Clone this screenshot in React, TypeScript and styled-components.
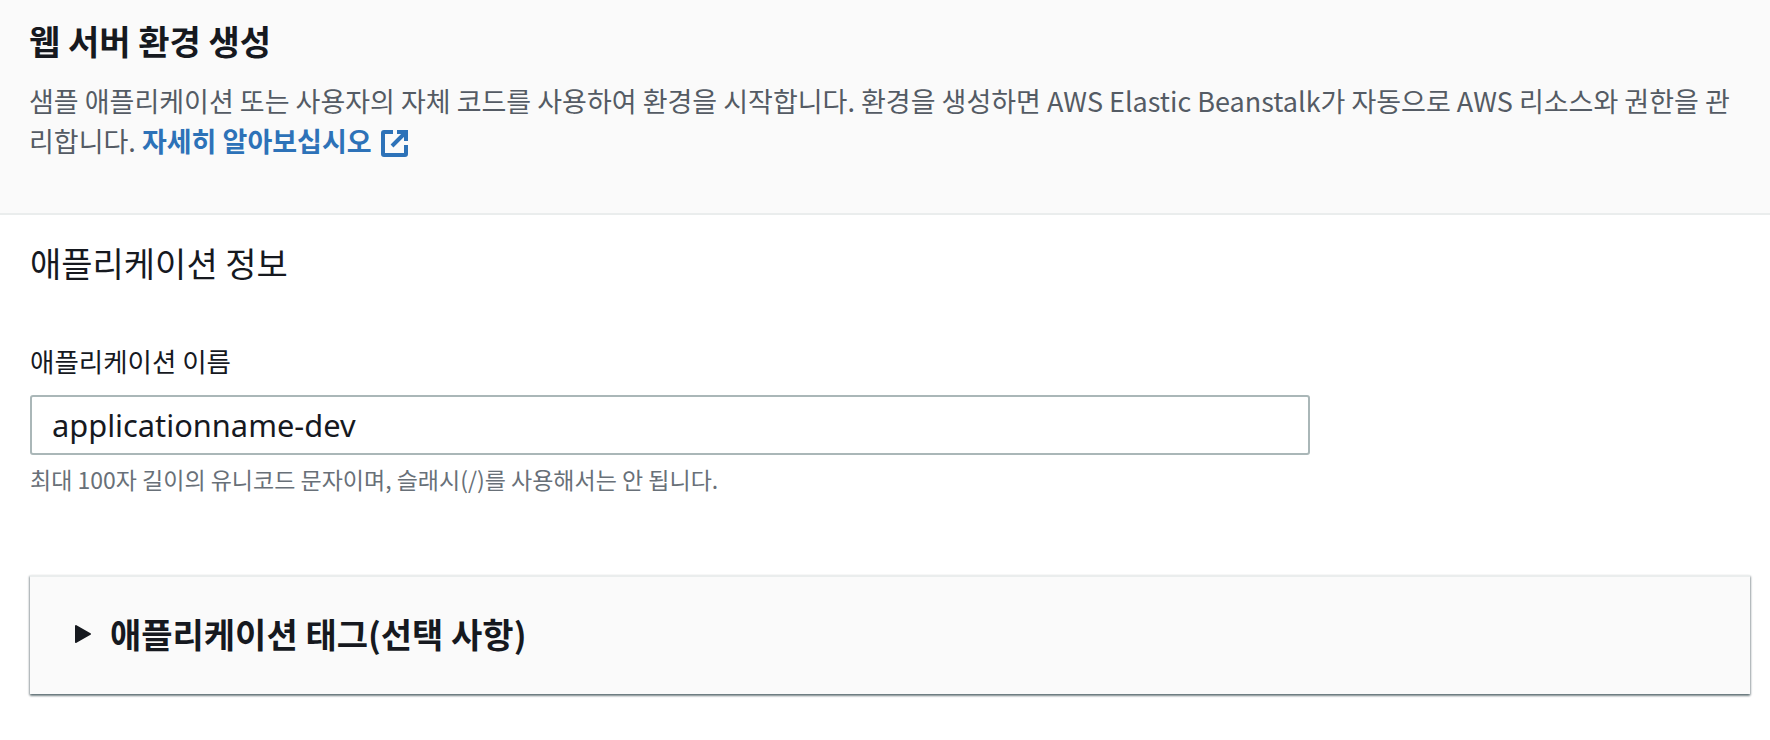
import styled, { createGlobalStyle } from 'styled-components';

const GlobalStyle = createGlobalStyle`
  * {
    box-sizing: border-box;
  }
  body {
    margin: 0;
    background: #fff;
    font-family: 'Noto Sans CJK KR', 'Noto Sans', sans-serif;
    color: #16191f;
  }
`;

const App = () => {
  return (
    <StPage>
      <GlobalStyle />
      <StHeader>
        <StTitle>웹 서버 환경 생성</StTitle>
        <StDescription>
          샘플 애플리케이션 또는 사용자의 자체 코드를 사용하여 환경을 시작합니다. 환경을 생성하면 AWS Elastic Beanstalk가 자동으로 AWS 리소스와 권한을 관리합니다.{' '}
          <StLink href="#">
            자세히 알아보십시오
            <StExternalIcon viewBox="0 0 28 28" aria-hidden="true">
              <path d="M12 3H3a1 1 0 0 0-1 1v21a1 1 0 0 0 1 1h21a1 1 0 0 0 1-1v-9" fill="none" stroke="currentColor" strokeWidth="4" />
              <path d="M16 3h9v9M25 3L11 17" fill="none" stroke="currentColor" strokeWidth="4" />
            </StExternalIcon>
          </StLink>
        </StDescription>
      </StHeader>
      <StSection>
        <StSectionTitle>애플리케이션 정보</StSectionTitle>
        <StLabel htmlFor="app-name">애플리케이션 이름</StLabel>
        <StInput id="app-name" defaultValue="applicationname-dev" />
        <StHint>최대 100자 길이의 유니코드 문자이며, 슬래시(/)를 사용해서는 안 됩니다.</StHint>
        <StPanel>
          <StCaret viewBox="0 0 18 20" aria-hidden="true">
            <path d="M2 2l14 8-14 8z" fill="currentColor" stroke="currentColor" strokeWidth="2" strokeLinejoin="round" />
          </StCaret>
          <StPanelTitle>애플리케이션 태그(선택 사항)</StPanelTitle>
        </StPanel>
      </StSection>
    </StPage>
  );
};

export default App;

const StPage = styled.main`
  width: 1770px;
  height: 740px;
  overflow: hidden;
`;

const StHeader = styled.header`
  height: 215px;
  padding: 20px 29px 0;
  background: #fafafa;
  border-bottom: 2px solid #eaeded;
`;

const StTitle = styled.h1`
  margin: 0;
  font-size: 34px;
  font-weight: 700;
  line-height: 42px;
`;

const StDescription = styled.p`
  margin: 19px 0 0;
  width: 1716px;
  font-size: 27px;
  line-height: 40px;
  color: #545b64;
`;

const StLink = styled.a`
  color: #2d72b8;
  font-weight: 700;
  text-decoration: none;
`;

const StExternalIcon = styled.svg`
  width: 28px;
  height: 28px;
  margin-left: 9px;
  vertical-align: -5px;
`;

const StSection = styled.section`
  display: flex;
  flex-direction: column;
  padding: 28px 20px 0 30px;
`;

const StSectionTitle = styled.h2`
  margin: 0;
  font-size: 34px;
  font-weight: 400;
  line-height: 40px;
`;

const StLabel = styled.label`
  margin-top: 62px;
  font-size: 26.5px;
  line-height: 32px;
`;

const StInput = styled.input`
  width: 1280px;
  height: 60px;
  margin-top: 18px;
  padding: 0 20px;
  border: 2px solid #aab7b8;
  border-radius: 3px;
  background: #fff;
  color: #16191f;
  font-family: 'Noto Sans', sans-serif;
  font-size: 30.8px;
`;

const StHint = styled.p`
  margin: 10px 0 0;
  font-size: 23px;
  line-height: 28px;
  color: #687078;
`;

const StPanel = styled.div`
  display: flex;
  align-items: center;
  gap: 18px;
  width: 1720px;
  height: 119px;
  margin-top: 82px;
  padding: 0 0 4px 44px;
  background: #fafafa;
  border-top: 2px solid #eaeded;
  box-shadow: 0 2px 2px 0 rgba(0, 28, 36, 0.4), 1px 1px 2px 0 rgba(0, 28, 36, 0.25),
    -1px 1px 2px 0 rgba(0, 28, 36, 0.25);
`;

const StCaret = styled.svg`
  width: 18px;
  height: 20px;
  color: #16191f;
`;

const StPanelTitle = styled.h3`
  margin: 0;
  font-size: 34px;
  font-weight: 700;
  line-height: 42px;
`;
